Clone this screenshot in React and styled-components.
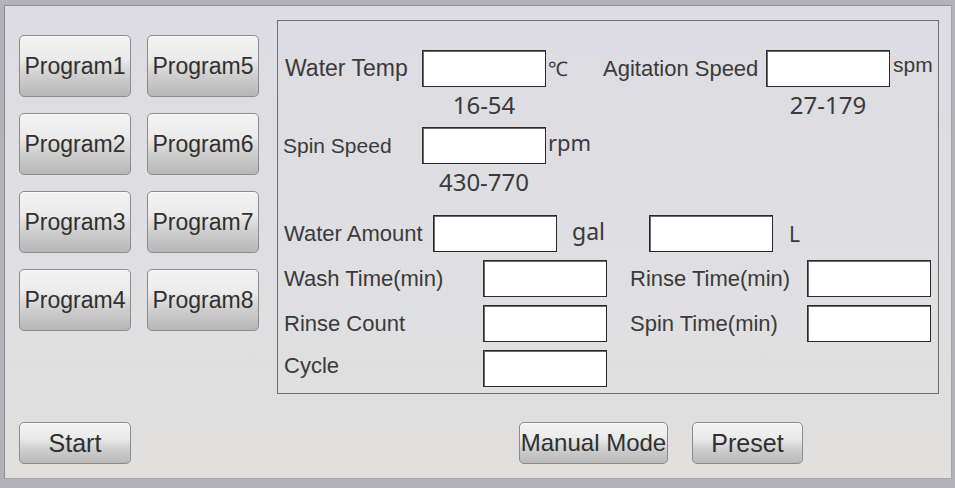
import React from "react";
import styled, { createGlobalStyle } from "styled-components";

const Global = createGlobalStyle`
  html, body { margin: 0; padding: 0; background: #b3b2b8; }
  body { font-family: "Liberation Sans", Arial, sans-serif; }
  * { box-sizing: border-box; }
`;

const Screen = styled.div`
  width: 955px;
  height: 488px;
  padding: 5px 3px 0 4px;
  background: #b3b2b8;
`;

const Panel = styled.div`
  height: 474px;
  border: 1px solid #8e8d93;
  border-right-color: #a5a4aa;
  border-bottom-color: #a5a4aa;
  background: linear-gradient(to bottom, #dddce2 0%, #dfdee2 50%, #e1e0de 100%);
  padding: 14px 0 0 14px;
  display: flex;
  flex-direction: column;
`;

const TopArea = styled.div`
  display: flex;
  align-items: flex-start;
`;

const ProgramGrid = styled.div`
  display: grid;
  grid-template-columns: 112px 112px;
  grid-template-rows: repeat(4, 62px);
  grid-auto-flow: column;
  column-gap: 16px;
  row-gap: 16px;
  margin-top: 15px;
`;

const Button = styled.button`
  width: ${(p) => p.$w || 112}px;
  height: ${(p) => p.$h || 62}px;
  padding: 0;
  border: 1px solid #8b8b8b;
  border-radius: 5px;
  background: linear-gradient(
    to bottom,
    #f3f3f3 0%,
    #ebebeb 38%,
    #cfcfcf 65%,
    #b7b7b7 100%
  );
  box-shadow: inset 0 1px 0 #fafafa;
  font-family: "Liberation Sans", Arial, sans-serif;
  font-size: ${(p) => p.$fs || 23}px;
  color: #303030;
  white-space: nowrap;
  display: flex;
  align-items: center;
  justify-content: center;
`;

const ParamBox = styled.div`
  margin-left: 18px;
  width: 662px;
  height: 374px;
  border: 1px solid #707070;
  display: flex;
  flex-direction: column;
`;

const Row = styled.div`
  display: flex;
  align-items: center;
  height: 37px;
  margin-top: ${(p) => p.$mt || 0}px;
  padding-left: ${(p) => p.$pl || 0}px;
`;

const Label = styled.div`
  width: ${(p) => p.$w}px;
  flex: none;
  font-size: ${(p) => p.$fs || 22}px;
  color: #3a3a3a;
  white-space: nowrap;
  padding-bottom: ${(p) => p.$up || 0}px;
`;

const Input = styled.div`
  width: 124px;
  height: 37px;
  flex: none;
  background: #ffffff;
  border: 1px solid #2a2a2a;
  box-shadow: inset 1px 1px 0 #6a6a6a;
`;

const Unit = styled.div`
  width: ${(p) => (p.$w ? `${p.$w}px` : "auto")};
  flex: none;
  padding-left: ${(p) => p.$pl || 2}px;
  padding-bottom: ${(p) => p.$up || 0}px;
  font-family: ${(p) =>
    p.$cjk
      ? `"Noto Sans", "Noto Sans CJK SC", sans-serif`
      : `"Liberation Sans", Arial, sans-serif`};
  font-size: ${(p) => p.$fs || 21}px;
  color: #3a3a3a;
  white-space: nowrap;
`;

const RangeRow = styled.div`
  display: flex;
  height: 24px;
  margin-top: 6px;
  padding-left: ${(p) => p.$pl}px;
`;

const Range = styled.div`
  width: 124px;
  margin-right: ${(p) => p.$mr || 0}px;
  text-align: center;
  font-family: "Noto Sans", sans-serif;
  font-size: 24px;
  line-height: 24px;
  color: #3a3a3a;
`;

const Gap = styled.div`
  width: ${(p) => p.$w}px;
  flex: none;
`;

const BottomBar = styled.div`
  display: flex;
  margin-top: 28px;
`;

const programs = [
  "Program1",
  "Program2",
  "Program3",
  "Program4",
  "Program5",
  "Program6",
  "Program7",
  "Program8",
];

export default function App() {
  return (
    <>
      <Global />
      <Screen>
        <Panel>
          <TopArea>
            <ProgramGrid>
              {programs.map((p) => (
                <Button key={p}>{p}</Button>
              ))}
            </ProgramGrid>
            <ParamBox>
              <Row $mt={29} $pl={7}>
                <Label $w={137} $fs={23}>Water Temp</Label>
                <Input />
                <Unit $w={57} $fs={20}>℃</Unit>
                <Label $w={163}>Agitation Speed</Label>
                <Input />
                <Unit $pl={3} $up={8}>spm</Unit>
              </Row>
              <RangeRow $pl={144}>
                <Range $mr={220}>16-54</Range>
                <Range>27-179</Range>
              </RangeRow>
              <Row $mt={10} $pl={5}>
                <Label $w={139} $fs={21}>Spin Speed</Label>
                <Input />
                <Unit $cjk $fs={22} $up={8}>rpm</Unit>
              </Row>
              <RangeRow $pl={144}>
                <Range>430-770</Range>
              </RangeRow>
              <Row $mt={21} $pl={6}>
                <Label $w={149}>Water Amount</Label>
                <Input />
                <Unit $w={92} $pl={15} $cjk $fs={23} $up={6}>gal</Unit>
                <Input />
                <Unit $pl={16} $cjk $fs={21}>L</Unit>
              </Row>
              <Row $mt={8} $pl={6}>
                <Label $w={199}>Wash Time(min)</Label>
                <Input />
                <Gap $w={23} />
                <Label $w={177}>Rinse Time(min)</Label>
                <Input />
              </Row>
              <Row $mt={8} $pl={6}>
                <Label $w={199}>Rinse Count</Label>
                <Input />
                <Gap $w={23} />
                <Label $w={177}>Spin Time(min)</Label>
                <Input />
              </Row>
              <Row $mt={8} $pl={6}>
                <Label $w={199} $up={6}>Cycle</Label>
                <Input />
              </Row>
            </ParamBox>
          </TopArea>
          <BottomBar>
            <Button $h={42} $fs={25}>Start</Button>
            <Gap $w={388} />
            <Button $w={149} $h={42} $fs={24}>Manual Mode</Button>
            <Gap $w={24} />
            <Button $w={111} $h={42} $fs={25}>Preset</Button>
          </BottomBar>
        </Panel>
      </Screen>
    </>
  );
}
